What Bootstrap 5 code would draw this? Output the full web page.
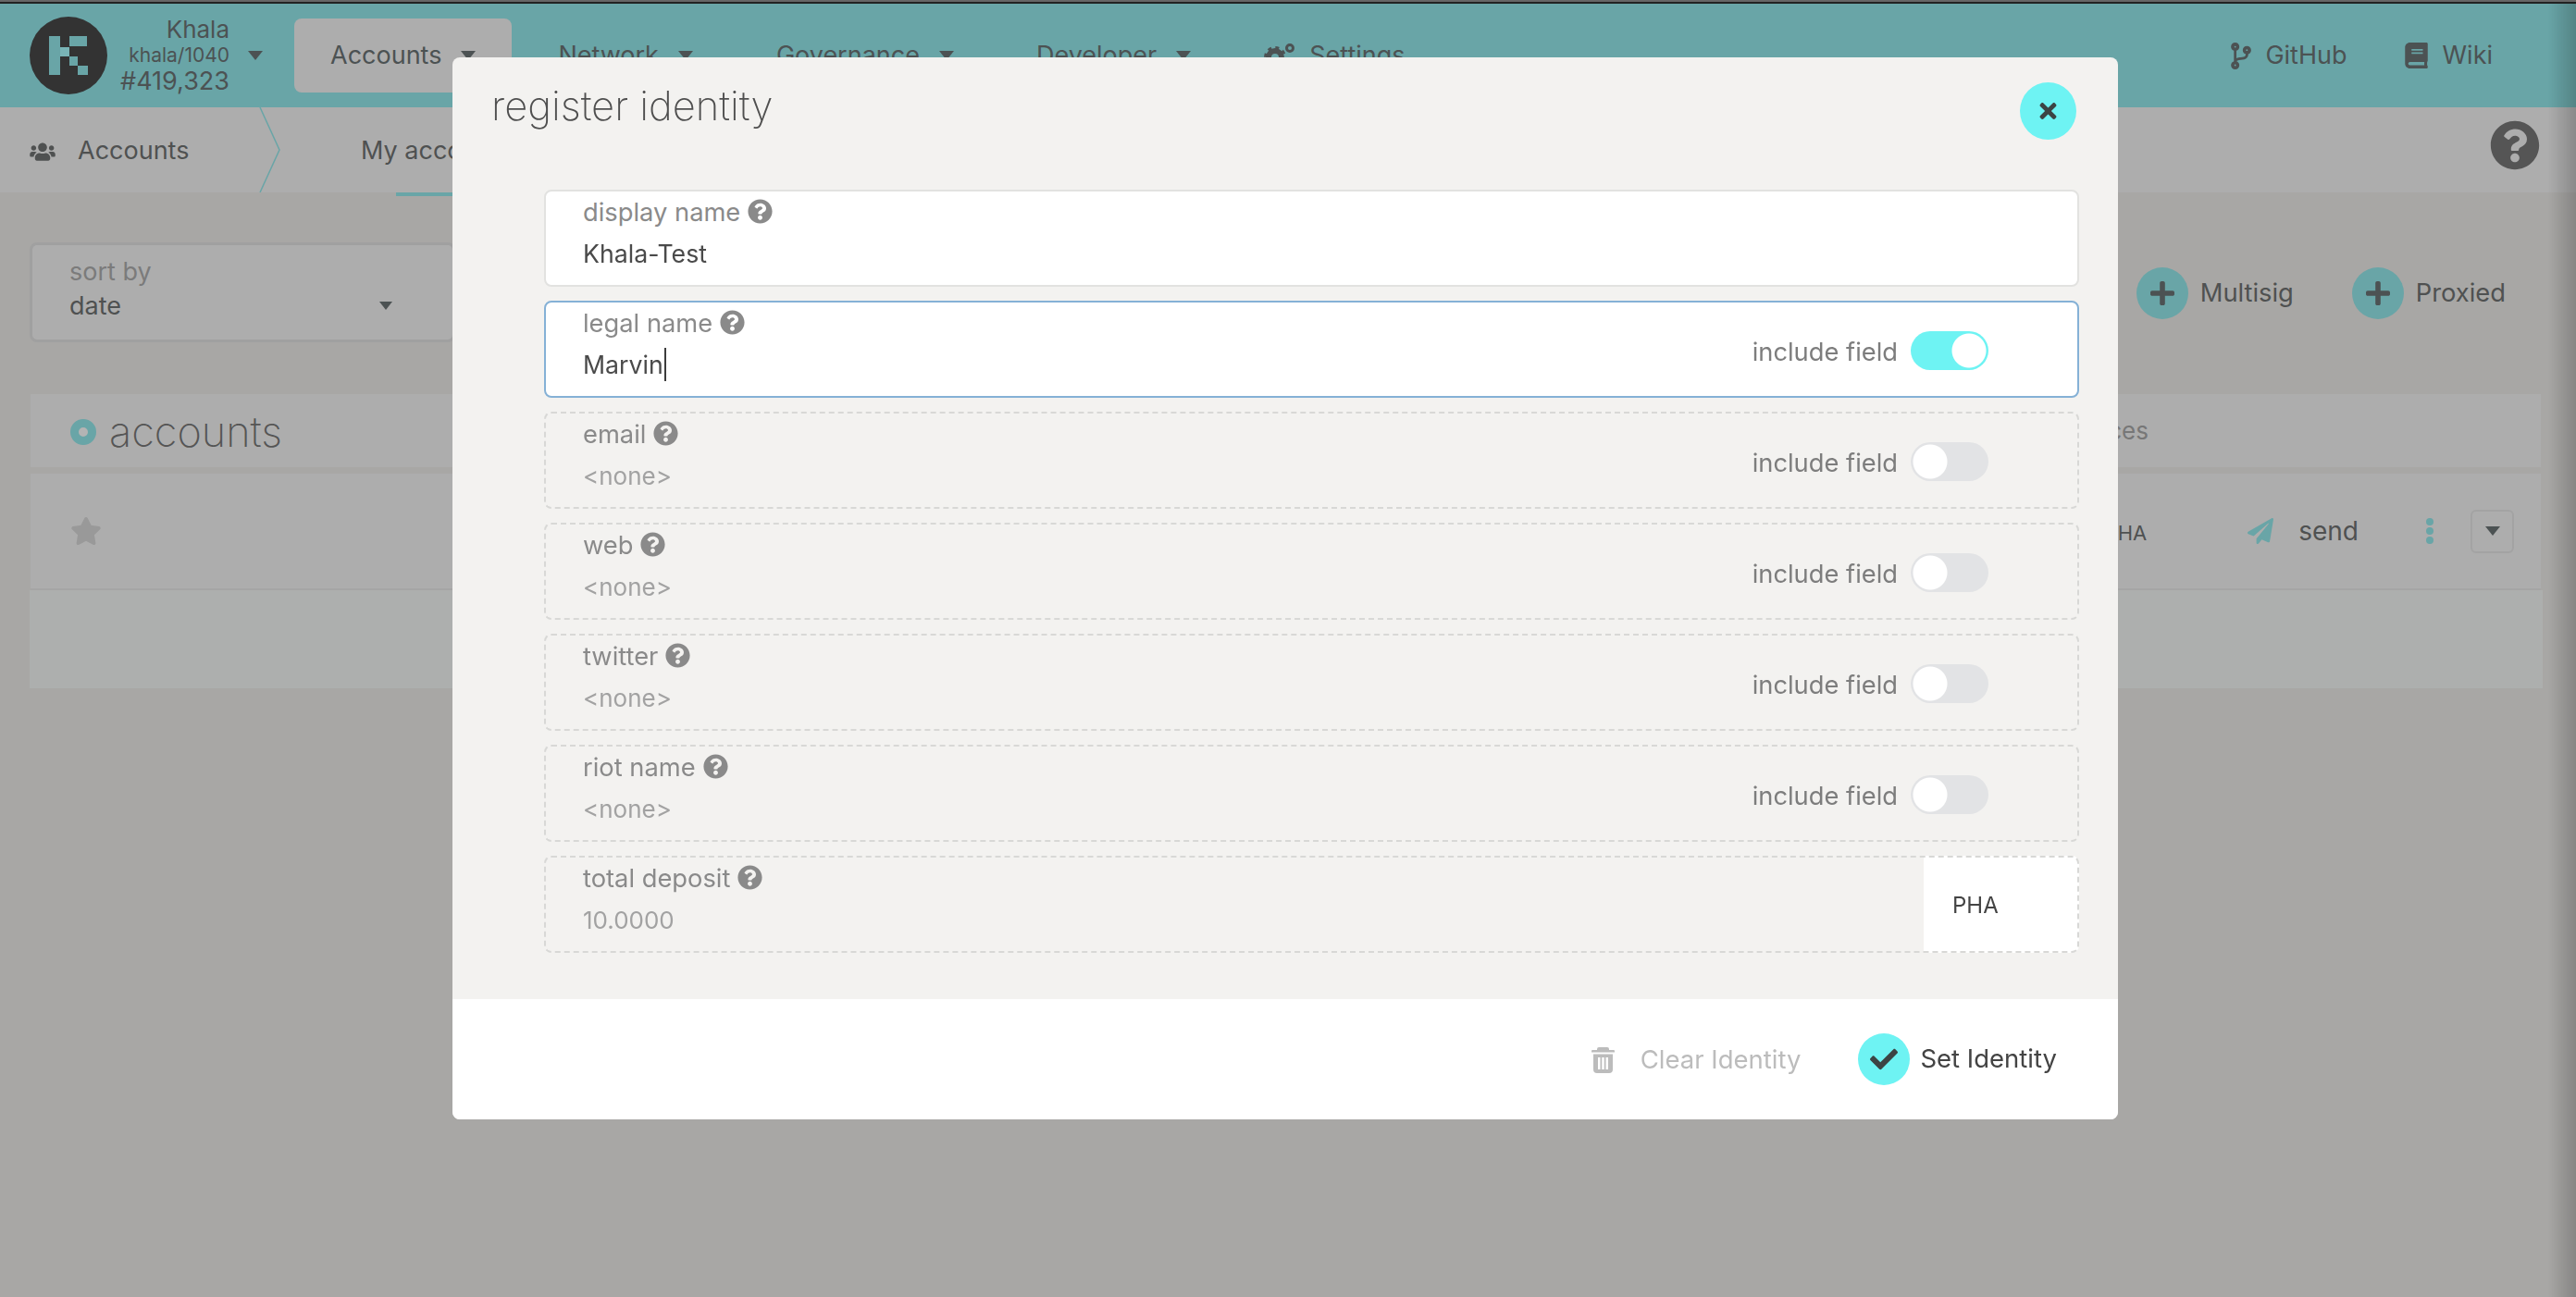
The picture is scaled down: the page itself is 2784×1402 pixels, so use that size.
<!DOCTYPE html>
<html lang="en">
<head>
  <meta charset="UTF-8">
  <title>register identity</title>
  <link href="https://cdn.jsdelivr.net/npm/bootstrap@5.3.3/dist/css/bootstrap.min.css" rel="stylesheet">
  <style>
    html, body { height: 100%; }
    body { background: #a8a7a5; font-family: Inter, "Liberation Sans", sans-serif; color: #4f5151; overflow: hidden; font-size: 27px; }
    svg { fill: currentColor; display: block; flex: none; }
    .top-edge { height: 4px; background: linear-gradient(#666 50%, #222 50%); }

    .app-nav { height: 112px; background: #69a5a7; padding: 0 0 0 32px !important; justify-content: flex-start; flex-wrap: nowrap; color: #4c5253; }
    .chain-logo { width: 84px; height: 84px; }
    .chain-info { width: 132px; text-align: right; line-height: 28px; margin-right: 20px; margin-top: -1px; }
    .chain-name { font-size: 26px; }
    .chain-spec { font-size: 21px; }
    .chain-block { font-size: 27px; }
    .tri { width: 0; height: 0; border-left: 8px solid transparent; border-right: 8px solid transparent; border-top: 10px solid #4c5253; flex: none; }
    .nav-tab { display: flex; align-items: center; height: 80px; border-radius: 8px; margin-left: 34px; padding: 0 39px; gap: 21px; }
    .nav-tab.is-open { background: #adadad; }
    .nav-tab.plain { padding: 0; }
    .nav-tab.tab-net { margin-left: 50px; }
    .nav-tab.tab-gov { margin-left: 90px; }
    .nav-tab.tab-dev { margin-left: 89px; }
    .nav-tab.tab-set { margin-left: 79px; gap: 15px; }
    .nav-ext { margin-left: auto; display: flex; align-items: center; color: #4c5253; padding-right: 90px; }
    .ext-item { display: flex; align-items: center; gap: 15px; }
    .ext-item + .ext-item { margin-left: 63px; }

    .sub-nav { height: 92px; background: #adadad; display: flex; align-items: center; padding-left: 32px; }
    .sub-head { display: flex; align-items: center; gap: 24px; width: 358px; padding-top: 3px; }
    .sub-chev { width: 24px; height: 92px; margin-left: -110px; margin-right: 86px; color: #69a5a7; }
    .sub-active { height: 92px; display: flex; align-items: center; position: relative; padding-top: 3px; }
    .sub-active::after { content: ""; position: absolute; left: 38px; right: -100px; bottom: -4px; height: 4px; background: #69a5a7; }
    .help-btn { margin-left: auto; margin-right: 39px; width: 54px; height: 54px; color: #555; margin-top: -11px; }

    .tool-row { height: 218px; padding: 54px 76px 0 32px; display: flex; align-items: flex-start; }
    .sort-box { width: 460px; height: 108px; border: 3px solid #a0a0a0; border-radius: 8px; background: #adadad; padding: 11px 40px 0; display: flex; justify-content: space-between; align-items: flex-start; }
    .sort-label { font-size: 27px; color: #7b7b7b; line-height: 36px; }
    .sort-val { font-size: 27px; line-height: 38px; }
    .sort-box .tri { margin-top: 50px; margin-right: 25px; border-left-width: 7px; border-right-width: 7px; border-top-width: 9px; }
    .add-btns { margin-left: auto; display: flex; align-items: center; gap: 63px; margin-top: 27px; }
    .add-item { display: flex; align-items: center; gap: 13px; font-size: 27.3px; }
    .add-dot { width: 56px; height: 56px; border-radius: 50%; background: #69a5a7; display: flex; align-items: center; justify-content: center; color: #4c5253; }

    .acct-table { margin: 0 38px 0 33px; }
    .acct-head { height: 79px; background: #adadad; display: flex; align-items: center; padding: 0 424px 0 43px; justify-content: space-between; }
    .acct-title { display: flex; align-items: center; gap: 14px; font-size: 45px; font-weight: 200; color: #555; line-height: 1; padding-top: 2px; }
    .ring { width: 28px; height: 28px; border-radius: 50%; border: 9px solid #69a5a7; background: #b4b4b4; }
    .acct-col { color: #777; font-size: 26px; margin-top: -1px; }
    .acct-row { margin-top: 7px; height: 126px; background: #adadad; border-bottom: 2px solid #a5a5a5; display: flex; align-items: center; padding: 0 29px 0 43px; }
    .row-star { width: 34px; height: 30px; color: #999; }
    .row-bal { margin-left: auto; font-size: 22px; margin-right: 109px; margin-top: 5px; }
    .row-send { color: #69a5a7; width: 28px; height: 28px; }
    .row-send-txt { margin-left: 27px; font-size: 28px; }
    .row-more { width: 10px; height: 28px; margin-left: 72px; color: #69a5a7; }
    .row-drop { width: 47px; height: 47px; margin-left: 39px; border: 2px solid #a3a3a3; border-radius: 6px; display: flex; align-items: center; justify-content: center; }
    .acct-foot { height: 106px; background: #adafae; margin: 0 -2px 0 -1px; }

    .edge-shade { position: fixed; top: 4px; bottom: 0; right: 0; width: 30px; background: linear-gradient(to right, rgba(0,0,0,0), rgba(0,0,0,.2)); }

    /* dialog lies over the page */
    .id-dialog { position: fixed; left: 489px; top: 62px; width: 1800px; height: 1148px; background: #f3f2f0; border: 0; border-radius: 8px; overflow: hidden; display: flex; flex-direction: column; }
    .id-header { height: 143px; padding: 20px 45px 0 42px; display: flex; justify-content: space-between; align-items: flex-start; border: 0; }
    .id-title { font-size: 43.500px; font-weight: 200; color: #4f4f4f; line-height: 64px; }
    .id-close { width: 61px; height: 62px; border-radius: 50%; background: #6ef3f3; border: 0; display: flex; align-items: center; justify-content: center; color: #3c4444; margin-top: 7px; padding: 0; }
    .id-body { flex: 1; padding: 0 42px 0 99px; display: flex; flex-direction: column; gap: 15px; }
    .id-field { height: 105px; border-radius: 8px; border: 2px dashed #d8d8d6; display: flex; align-items: stretch; justify-content: space-between; padding-left: 40px; }
    .id-field.is-on { background: #fff; border: 2px solid #e2e2e0; }
    .id-field.is-focus { background: #fff; border: 2px solid #85b1d6; }
    .id-field.has-unit { background: linear-gradient(to right, transparent 1491px, #fff 1491px); background-origin: border-box; }
    .id-label { font-size: 27.300px; color: #8a8a8a; line-height: 36px; margin-top: 5px; display: flex; align-items: center; gap: 8px; }
    .id-label svg { width: 27px; height: 27px; color: #8a8a8a; margin-top: -4px; }
    .id-value { font-size: 26.700px; color: #4a4a4a; line-height: 36px; margin-top: 8px; display: flex; align-items: center; }
    .id-value.is-none { color: #a2a2a2; font-size: 26px; margin-top: 9px; }
    .text-cursor { width: 2px; height: 36px; background: #3c3c3c; margin-left: 1px; }
    .id-toggle { display: flex; align-items: center; padding: 7px 96px 0 0; gap: 14px; margin: 0; min-height: 0; font-size: 27.300px; color: #7d7d7d; }
    .id-toggle .form-check-input { width: 84px; height: 42px; margin: -5px 0 0; float: none; border: 0; background-color: #e2e3e5; background-image: radial-gradient(circle at 21px 21px, #fff 18px, transparent 19px); background-position: 0 0; background-size: auto; cursor: default; }
    .id-toggle .form-check-input:checked { background-color: #6ef3f3; background-image: radial-gradient(circle at 63px 21px, #fff 18px, transparent 19px); background-position: 0 0; }
    .id-unit { width: 165px; font-size: 24px; color: #444; display: flex; align-items: center; padding-left: 30px; padding-top: 3px; }
    .id-footer { height: 130px; background: #fff; display: flex; align-items: center; justify-content: flex-end; padding: 0 66px 0 0; border: 0; }
    .btn-ghost { display: flex; align-items: center; gap: 28px; color: #bcbcbc; margin-right: 62px; margin-top: 2px; font-size: 27.500px; }
    .btn-ghost svg { width: 25px; height: 28px; }
    .btn-confirm { display: flex; align-items: center; gap: 11px; color: #444; font-size: 27.500px; line-height: 1; }
    .check-dot { width: 56px; height: 56px; border-radius: 50%; background: #6ef3f3; display: flex; align-items: center; justify-content: center; color: #3c4444; }
  </style>
</head>
<body>
  <div class="top-edge"></div>
  <nav class="navbar app-nav">
    <svg class="chain-logo" viewBox="0 0 84 84"><circle cx="42" cy="42" r="42" fill="#333"/><path fill="#69a5a7" d="M21 21h12v42H21zM43 21h19v11H43zM43 43h9v10h-9zM52 53h11v10H52z"/><path fill="#79b4b6" d="M33 33h10v10H33z"/></svg>
    <div class="chain-info">
      <div class="chain-name">Khala</div>
      <div class="chain-spec">khala/1040</div>
      <div class="chain-block">#419,323</div>
    </div>
    <span class="tri"></span>
    <div class="nav-tab is-open">Accounts <span class="tri"></span></div>
    <div class="nav-tab plain tab-net">Network <span class="tri"></span></div>
    <div class="nav-tab plain tab-gov">Governance <span class="tri"></span></div>
    <div class="nav-tab plain tab-dev">Developer <span class="tri"></span></div>
    <div class="nav-tab plain tab-set">
      <svg width="34" height="28" viewBox="0 0 34 28"><circle cx="12" cy="16" r="7" fill="none" stroke="currentColor" stroke-width="6"/><circle cx="12" cy="16" r="10.500" fill="none" stroke="currentColor" stroke-width="3" stroke-dasharray="4 4.250"/><circle cx="28" cy="6" r="3.500" fill="none" stroke="currentColor" stroke-width="3"/></svg>
      Settings
    </div>
    <div class="nav-ext">
      <div class="ext-item">
        <svg width="22" height="29" viewBox="0 0 384 512"><path d="M384 144c0-44.2-35.8-80-80-80s-80 35.8-80 80c0 36.4 24.3 67.1 57.5 76.8-.6 16.1-4.2 28.5-11 36.9-15.4 19.2-49.3 22.4-85.2 25.7-28.2 2.6-57.4 5.4-81.3 16.9v-144c32.5-10.2 56-40.5 56-76.3 0-44.2-35.8-80-80-80S0 35.8 0 80c0 35.8 23.5 66.1 56 76.3v199.3C23.5 365.9 0 396.2 0 432c0 44.2 35.8 80 80 80s80-35.8 80-80c0-34-21.2-63.1-51.2-74.6 3.1-5.2 7.8-9.8 14.9-13.4 16.2-8.2 40.4-10.4 66.1-12.8 42.2-3.9 90-8.4 118.2-43.4 14-17.4 21.1-39.8 21.6-67.9 31.6-10.8 54.4-40.7 54.4-75.9zM80 64c8.8 0 16 7.2 16 16s-7.2 16-16 16-16-7.2-16-16 7.2-16 16-16zm0 384c-8.8 0-16-7.2-16-16s7.2-16 16-16 16 7.2 16 16-7.2 16-16 16zm224-320c8.8 0 16 7.2 16 16s-7.2 16-16 16-16-7.2-16-16 7.2-16 16-16z"/></svg>
        GitHub
      </div>
      <div class="ext-item">
        <svg width="25" height="28" viewBox="0 0 448 512"><path d="M448 360V24c0-13.3-10.7-24-24-24H96C43 0 0 43 0 96v320c0 53 43 96 96 96h328c13.3 0 24-10.7 24-24v-16c0-7.5-3.5-14.3-8.9-18.7-4.2-15.4-4.2-59.3 0-74.7 5.4-4.3 8.9-11.1 8.9-18.6zM128 134c0-3.3 2.7-6 6-6h212c3.3 0 6 2.7 6 6v20c0 3.3-2.7 6-6 6H134c-3.3 0-6-2.7-6-6v-20zm0 64c0-3.3 2.7-6 6-6h212c3.3 0 6 2.7 6 6v20c0 3.3-2.7 6-6 6H134c-3.3 0-6-2.7-6-6v-20zm253.4 250H96c-17.7 0-32-14.3-32-32 0-17.6 14.4-32 32-32h285.4c-1.9 17.1-1.9 46.9 0 64z"/></svg>
        Wiki
      </div>
    </div>
  </nav>

  <div class="sub-nav">
    <div class="sub-head">
      <svg width="28" height="22" viewBox="0 0 640 512"><path d="M96 224c35.3 0 64-28.7 64-64s-28.7-64-64-64-64 28.7-64 64 28.7 64 64 64zm448 0c35.3 0 64-28.7 64-64s-28.7-64-64-64-64 28.7-64 64 28.7 64 64 64zm32 32h-64c-17.6 0-33.5 7.1-45.1 18.6 40.3 22.1 68.9 62 75.1 109.4h66c17.7 0 32-14.3 32-32v-32c0-35.3-28.7-64-64-64zm-256 0c61.9 0 112-50.1 112-112S381.9 32 320 32 208 82.1 208 144s50.1 112 112 112zm76.8 32h-8.3c-20.8 10-43.9 16-68.5 16s-47.6-6-68.5-16h-8.3C179.6 288 128 339.6 128 403.2V432c0 26.5 21.5 48 48 48h288c26.5 0 48-21.5 48-48v-28.8c0-63.6-51.6-115.2-115.2-115.2zm-223.7-13.4C161.5 263.1 145.6 256 128 256H64c-35.3 0-64 28.7-64 64v32c0 17.7 14.3 32 32 32h65.9c6.3-47.4 34.9-87.3 75.2-109.4z"/></svg>
      Accounts
    </div>
    <svg class="sub-chev" viewBox="0 0 24 92"><path d="M1 0l21 46L1 92" fill="none" stroke="currentColor" stroke-width="1.5"/></svg>
    <div class="sub-active">My accounts</div>
    <svg class="help-btn" viewBox="0 0 512 512"><use href="#q"/></svg>
  </div>

  <div class="tool-row">
    <div class="sort-box">
      <div>
        <div class="sort-label">sort by</div>
        <div class="sort-val">date</div>
      </div>
      <span class="tri"></span>
    </div>
    <div class="add-btns">
      <div class="add-item">
        <span class="add-dot"><svg width="26" height="30" viewBox="0 0 448 512"><path d="M416 208H272V64c0-17.67-14.33-32-32-32h-32c-17.67 0-32 14.33-32 32v144H32c-17.67 0-32 14.33-32 32v32c0 17.67 14.33 32 32 32h144v144c0 17.67 14.33 32 32 32h32c17.67 0 32-14.33 32-32V304h144c17.67 0 32-14.33 32-32v-32c0-17.67-14.33-32-32-32z"/></svg></span>
        Multisig
      </div>
      <div class="add-item">
        <span class="add-dot"><svg width="26" height="30" viewBox="0 0 448 512"><path d="M416 208H272V64c0-17.67-14.33-32-32-32h-32c-17.67 0-32 14.33-32 32v144H32c-17.67 0-32 14.33-32 32v32c0 17.67 14.33 32 32 32h144v144c0 17.67 14.33 32 32 32h32c17.67 0 32-14.33 32-32V304h144c17.67 0 32-14.33 32-32v-32c0-17.67-14.33-32-32-32z"/></svg></span>
        Proxied
      </div>
    </div>
  </div>

  <div class="acct-table">
    <div class="acct-head">
      <div class="acct-title"><span class="ring"></span> accounts</div>
      <div class="acct-col">balances</div>
    </div>
    <div class="acct-row">
      <svg class="row-star" viewBox="0 0 576 512"><path d="M259.3 17.8L194 150.2 47.9 171.5c-26.2 3.8-36.7 36.1-17.7 54.6l105.7 103-25 145.5c-4.5 26.3 23.2 46 46.4 33.7L288 439.6l130.7 68.7c23.2 12.2 50.9-7.4 46.4-33.7l-25-145.5 105.7-103c19-18.5 8.5-50.8-17.7-54.6L382 150.2 316.7 17.8c-11.7-23.6-45.6-23.9-57.4 0z"/></svg>
      <div class="row-bal">0.0000 PHA</div>
      <svg class="row-send" viewBox="0 0 512 512"><path d="M476 3.2L12.5 270.6c-18.1 10.4-15.8 35.6 2.2 43.2L121 358.4l287.3-253.2c5.5-4.9 13.3 2.6 8.6 8.3L176 407v80.5c0 23.6 28.5 32.9 42.5 15.8L282 426l124.6 52.2c14.2 6 30.4-2.9 33-18.2l72-432C515 7.8 493.3-6.8 476 3.2z"/></svg>
      <div class="row-send-txt">send</div>
      <svg class="row-more" viewBox="0 0 10 28"><circle cx="5" cy="4" r="4"/><circle cx="5" cy="14" r="4"/><circle cx="5" cy="24" r="4"/></svg>
      <div class="row-drop"><span class="tri"></span></div>
    </div>
    <div class="acct-foot"></div>
  </div>

  <div class="edge-shade"></div>

  <div class="id-dialog modal-content">
    <div class="modal-header id-header">
      <div class="modal-title id-title">register identity</div>
      <button type="button" class="id-close"><svg width="19" height="26" viewBox="0 0 352 512"><path d="M242.72 256l100.07-100.07c12.28-12.28 12.28-32.19 0-44.48l-22.24-22.24c-12.28-12.28-32.19-12.28-44.48 0L176 189.28 75.93 89.21c-12.28-12.28-32.19-12.28-44.48 0L9.21 111.45c-12.28 12.28-12.28 32.19 0 44.48L109.28 256 9.21 356.07c-12.28 12.28-12.28 32.19 0 44.48l22.24 22.24c12.28 12.28 32.2 12.28 44.48 0L176 322.72l100.07 100.07c12.28 12.28 32.2 12.28 44.48 0l22.24-22.24c12.28-12.28 12.28-32.19 0-44.48L242.72 256z"/></svg></button>
    </div>
    <div class="modal-body id-body">
      <div class="id-field is-on">
        <div>
          <div class="id-label">display name <svg viewBox="0 0 512 512"><use href="#q"/></svg></div>
          <div class="id-value">Khala-Test</div>
        </div>
      </div>
      <div class="id-field is-focus">
        <div>
          <div class="id-label">legal name <svg viewBox="0 0 512 512"><use href="#q"/></svg></div>
          <div class="id-value">Marvin<span class="text-cursor"></span></div>
        </div>
        <label class="form-check form-switch id-toggle">include field <input class="form-check-input" type="checkbox" role="switch" checked></label>
      </div>
      <div class="id-field">
        <div>
          <div class="id-label">email <svg viewBox="0 0 512 512"><use href="#q"/></svg></div>
          <div class="id-value is-none">&lt;none&gt;</div>
        </div>
        <label class="form-check form-switch id-toggle">include field <input class="form-check-input" type="checkbox" role="switch"></label>
      </div>
      <div class="id-field">
        <div>
          <div class="id-label">web <svg viewBox="0 0 512 512"><use href="#q"/></svg></div>
          <div class="id-value is-none">&lt;none&gt;</div>
        </div>
        <label class="form-check form-switch id-toggle">include field <input class="form-check-input" type="checkbox" role="switch"></label>
      </div>
      <div class="id-field">
        <div>
          <div class="id-label">twitter <svg viewBox="0 0 512 512"><use href="#q"/></svg></div>
          <div class="id-value is-none">&lt;none&gt;</div>
        </div>
        <label class="form-check form-switch id-toggle">include field <input class="form-check-input" type="checkbox" role="switch"></label>
      </div>
      <div class="id-field">
        <div>
          <div class="id-label">riot name <svg viewBox="0 0 512 512"><use href="#q"/></svg></div>
          <div class="id-value is-none">&lt;none&gt;</div>
        </div>
        <label class="form-check form-switch id-toggle">include field <input class="form-check-input" type="checkbox" role="switch"></label>
      </div>
      <div class="id-field has-unit">
        <div>
          <div class="id-label">total deposit <svg viewBox="0 0 512 512"><use href="#q"/></svg></div>
          <div class="id-value is-none">10.0000</div>
        </div>
        <div class="id-unit">PHA</div>
      </div>
    </div>
    <div class="modal-footer id-footer">
      <div class="btn-ghost">
        <svg viewBox="0 0 25 28"><path d="M8 0h9a2 2 0 0 1 2 2v1h5a1 1 0 0 1 1 1v1.500H0V4a1 1 0 0 1 1-1h5V2a2 2 0 0 1 2-2zM2 7.500h21V24a4 4 0 0 1-4 4H6a4 4 0 0 1-4-4zM7 11v13h2.500V11zM11.250 11v13h2.500V11zM15.500 11v13H18V11z" fill-rule="evenodd"/></svg>
        Clear Identity
      </div>
      <div class="btn-confirm">
        <span class="check-dot"><svg width="30" height="30" viewBox="0 0 512 512"><path d="M173.898 439.404l-166.4-166.4c-9.997-9.997-9.997-26.206 0-36.204l36.203-36.204c9.997-9.998 26.207-9.998 36.204 0L192 312.69 432.095 72.596c9.997-9.997 26.207-9.997 36.204 0l36.203 36.204c9.997 9.997 9.997 26.206 0 36.204l-294.4 294.401c-9.998 9.997-26.207 9.997-36.204-.001z"/></svg></span>
        Set Identity
      </div>
    </div>
  </div>

  <svg width="0" height="0" class="position-absolute"><defs><path id="q" d="M504 256c0 136.997-111.043 248-248 248S8 392.997 8 256C8 119.083 119.043 8 256 8s248 111.083 248 248zM262.655 90c-54.497 0-89.255 22.957-116.549 63.758-3.536 5.286-2.353 12.415 2.715 16.258l34.699 26.31c5.205 3.947 12.621 3.008 16.665-2.122 17.864-22.658 30.113-35.797 57.303-35.797 20.429 0 45.698 13.148 45.698 32.958 0 14.976-12.363 22.667-32.534 33.976C247.128 238.528 216 254.941 216 296v4c0 6.627 5.373 12 12 12h56c6.627 0 12-5.373 12-12v-1.333c0-28.462 83.186-29.647 83.186-106.667 0-58.002-60.165-102-116.531-102zM256 338c-25.365 0-46 20.635-46 46 0 25.364 20.635 46 46 46s46-20.636 46-46c0-25.365-20.635-46-46-46z"/></defs></svg>

  <script src="https://cdn.jsdelivr.net/npm/bootstrap@5.3.3/dist/js/bootstrap.bundle.min.js"></script>
</body>
</html>
